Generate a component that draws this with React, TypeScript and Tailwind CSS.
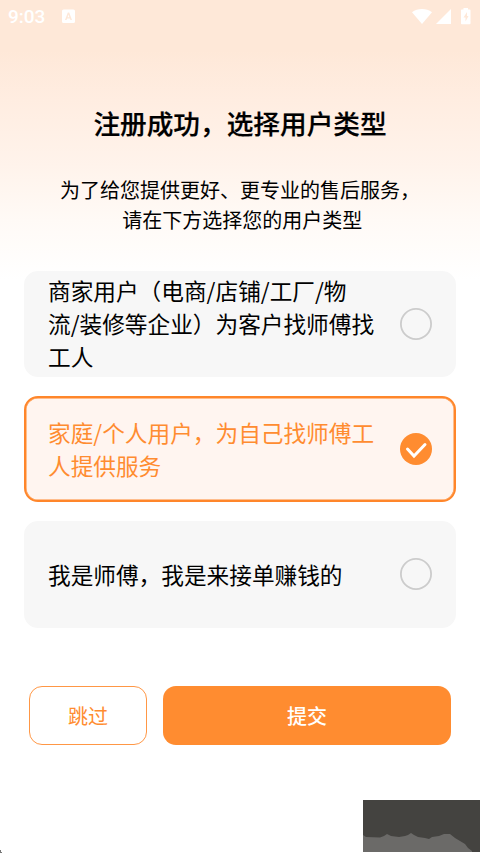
import { useState } from "react";

const options = [
  ["商家用户（电商/店铺/工厂/物", "流/装修等企业）为客户找师傅找", "工人"],
  ["家庭/个人用户，为自己找师傅工", "人提供服务"],
  ["我是师傅，我是来接单赚钱的"],
];

function StatusBar() {
  return (
    <header className="flex h-8 items-center pl-2 pr-[9px] text-white">
      <span className="w-[54px] pt-px font-[Roboto] text-[19px] font-medium leading-8">9:03</span>
      <svg className="h-[15px] w-[13px]" viewBox="0 0 13 15">
        <path fill="currentColor" fillRule="evenodd" d="M1.5 .5h10A1.500 1.500 0 0 1 13 2v10.500a1.500 1.500 0 0 1-1.500 1.500h-10A1.500 1.500 0 0 1 0 12.500V2A1.500 1.500 0 0 1 1.500 .5ZM5.800 3.500 3 11h1.500l.6-1.600h2.800l.6 1.600H10L7.200 3.500Zm.7 2 .9 2.700H5.600Z" />
      </svg>
      <svg className="ml-auto h-[17px] w-[60px]" viewBox="0 0 60 17" fill="currentColor">
        <path d="M1 4.200C6.500-.1 15.500-.1 21 4.200L11 16Z" />
        <path d="M40 1V16H25Z" />
        <path fillRule="evenodd" d="M52.500 0h4.500v1.500h1.700a.8.8 0 0 1 .8.800v13.200a.8.8 0 0 1-.8.800h-7.900a.8.8 0 0 1-.8-.8V2.300a.8.8 0 0 1 .8-.8h1.700ZM56 4 52.500 9.500h2V13.500l3-5.500H56Z" />
      </svg>
    </header>
  );
}

function Radio({ checked }: { checked: boolean }) {
  return (
    <svg className="size-8 shrink-0" viewBox="0 0 32 32" fill="none">
      {checked ? (
        <>
          <circle cx="16" cy="16" r="16" fill="#ff8c30" />
          <path d="m7.500 16 6.500 7L25 11.500" stroke="white" strokeWidth="3" strokeLinecap="round" />
        </>
      ) : (
        <circle cx="16" cy="16" r="15.100" stroke="#cccccc" strokeWidth="1.800" />
      )}
    </svg>
  );
}

export default function App() {
  const [selected, setSelected] = useState(1);
  return (
    <main className="flex h-[853px] w-[480px] flex-col overflow-hidden bg-white bg-[linear-gradient(180deg,#fee8d8_0px,#fee8d8_50px,#ffede1_100px,#fff3eb_165px,#fffaf6_220px,#ffffff_280px)] font-['Noto_Sans_CJK_SC',sans-serif] text-black">
      <StatusBar />
      <h1 className="mt-[71px] text-center text-[26.67px] font-medium leading-10 [-webkit-text-stroke:0.2px_black]">注册成功，选择用户类型</h1>
      <p className="mt-8 text-center text-[20px] leading-[30px]">
        为了给您提供更好、更专业的售后服务，
        <br />
        &nbsp;请在下方选择您的用户类型
      </p>
      <div className="mx-6 mt-[35.500px] flex flex-col gap-[18.700px]" role="radiogroup">
        {options.map((lines, i) => (
          <button
            key={i}
            role="radio"
            aria-checked={selected === i}
            onClick={() => setSelected(i)}
            className={
              "flex h-[106.600px] items-center justify-between rounded-[14px] border-2 px-[22px] text-left text-[22.670px] leading-[33.300px] whitespace-nowrap " +
              (selected === i
                ? "border-[#ff862a] bg-[#fff5f0] text-[#ff8c30] shadow-[inset_0_0_0_0.5px_#ff862a]"
                : "border-[#f7f7f7] bg-[#f7f7f7]")
            }
          >
            <span>
              {lines.map((line) => (
                <span key={line} className="block">{line}</span>
              ))}
            </span>
            <Radio checked={selected === i} />
          </button>
        ))}
      </div>
      <div className="mx-[29px] mt-[58.700px] flex gap-4 text-[20px]">
        <button className="h-[58.600px] w-[118px] rounded-[13px] border border-[#ff9745] bg-white text-[#ff8c30]">跳过</button>
        <button className="h-[58.600px] flex-1 rounded-[13px] bg-[#ff8c30] font-medium text-white">提交</button>
      </div>
      <footer className="mt-auto flex h-[53px] items-end justify-between">
        <svg className="h-[3px] w-[2px]" viewBox="0 0 2 3">
          <path d="M0 0h1v2h1v1H0Z" fill="#777" />
        </svg>
        <svg className="h-[53px] w-[117px]" viewBox="0 0 117 53">
          <path fill="#444340" d="M0 0h117v52H0Z" />
          <path fill="#6b6a68" d="M0 35 3 37 17 37.500 21 36 24 34 28 36 36 37 42 36 45 35 48 33 51 35 55 37 62 38 66 39 69 37 76 36 81 34H87L92 38 97 41 102 44 105 48 109 51V52H0Z" />
        </svg>
      </footer>
    </main>
  );
}
